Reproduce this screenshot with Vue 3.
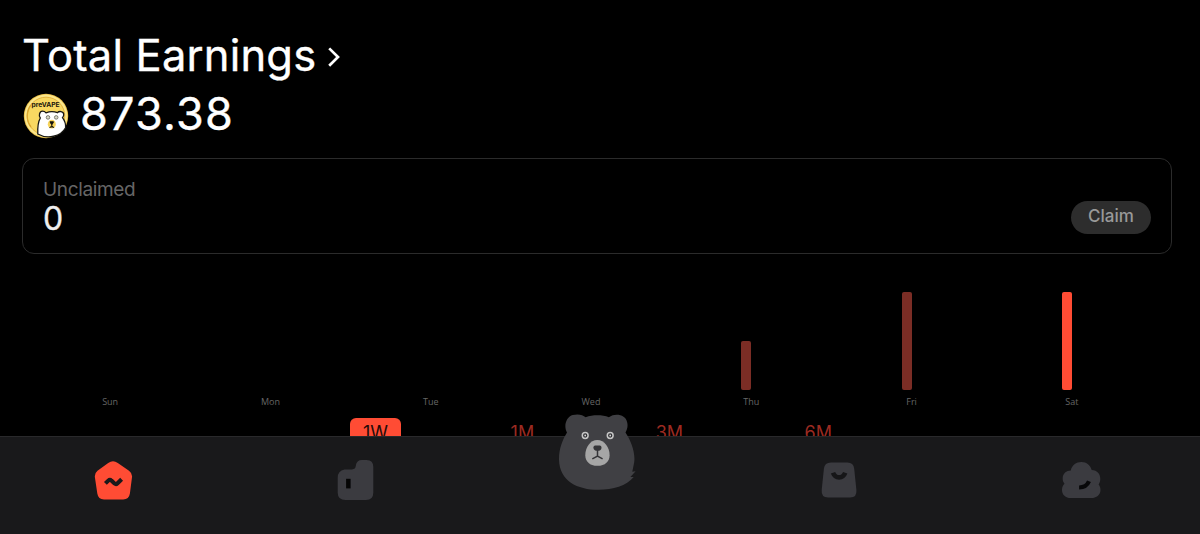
<script setup>
import { ref } from 'vue'

const days = [
  { label: 'Sun', height: 0 },
  { label: 'Mon', height: 0 },
  { label: 'Tue', height: 0 },
  { label: 'Wed', height: 0 },
  { label: 'Thu', height: 49 },
  { label: 'Fri', height: 98 },
  { label: 'Sat', height: 98 },
]

const periods = ['1W', '1M', '3M', '6M']
const period = ref('1W')
const today = 'Sat'
</script>

<template>
  <div class="screen">
    <main class="content">
      <!-- Earnings summary -->
      <h1 class="title">
        <span class="title-text">Total Earnings</span>
        <svg class="chevron" width="14" height="22" viewBox="0 0 14 22">
          <path d="M2.2 2.4 11 11l-8.8 8.8" fill="none" stroke="#fff" stroke-width="2.7" />
        </svg>
      </h1>
      <div class="balance">
        <svg class="coin" width="46" height="46" viewBox="0 0 46 46">
          <circle cx="23" cy="23" r="22.2" fill="#e9be45" />
          <circle cx="23" cy="23" r="21.4" fill="#fbe68b" />
          <circle cx="23" cy="23" r="18.8" fill="#f8d861" stroke="#e4b33c" stroke-width="1" />
          <path d="M8 12a18 18 0 0 0 0 22" fill="none" stroke="#dba72f" stroke-width="1.3" />
          <path
            d="M14.8 41C14.5 34 15 29 17.3 25c-1.9-2-.8-6.9 2.2-6.9 1.7 0 2.7.7 3.5 1.7 3.9-1.6 8-1.5 11.5-.1 1.5-2 6-1.4 6.2 1.4.2 1.6-.5 2.8-1.2 3.5 2.5 3.4 3.5 6.3 3.1 10.1-4.8 8.7-18 12-27.8 6.3z"
            fill="#fff" stroke="#171713" stroke-width="1.3"
          />
          <circle cx="25" cy="24.4" r="1.8" fill="#d9d9c6" stroke="#55554b" stroke-width=".7" />
          <circle cx="33.2" cy="24.4" r="1.8" fill="#d9d9c6" stroke="#55554b" stroke-width=".7" />
          <ellipse cx="28.8" cy="31.2" rx="4" ry="4.4" fill="#f8d45a" />
          <path d="M27 28.8h3.5l-1.2 2.4h-1zM28.8 31v2.3m-2.3 1.3 2.3-1.4 2.3 1.4" fill="#16140e" stroke="#16140e" stroke-width="1" />
          <text x="22.6" y="14.4" class="coin-text">preVAPE</text>
        </svg>
        <span class="amount">873.38</span>
      </div>

      <section class="card">
        <div class="card-info">
          <div class="card-label">Unclaimed</div>
          <div class="card-value">0</div>
        </div>
        <button class="claim">Claim</button>
      </section>

      <!-- Weekly chart -->
      <section class="chart">
        <div v-for="d in days" :key="d.label" class="day">
          <div class="track">
            <div
              v-if="d.height"
              class="bar"
              :class="{ active: d.label === today }"
              :style="{ height: d.height + 'px' }"
            ></div>
          </div>
          <div class="day-label">{{ d.label }}</div>
        </div>
      </section>

      <div class="periods">
        <button
          v-for="p in periods"
          :key="p"
          class="period"
          :class="{ active: p === period }"
          @click="period = p"
        >{{ p }}</button>
      </div>
    </main>

    <!-- Bottom navigation -->
    <nav class="nav">
      <a class="nav-item" aria-label="Home">
        <svg width="40" height="44" viewBox="0 0 40 44">
          <path d="M15.2 2.9Q20 -.5 24.8 2.9L36 10.8Q39.8 13.6 38.9 18L36.9 33.6Q36 39.5 30.2 39.5H11Q5.2 39.5 4.3 33.6L2 18Q1.1 13.6 4.5 10.8Z" fill="#ff4c34" />
          <path d="m12.4 23.4 2.9-2.8q1.6-1.5 3.1 0l3.1 2.9q1.5 1.2 2.8 0l4.3-4.2" fill="none" stroke="#19191b" stroke-width="4.1" />
        </svg>
      </a>
      <a class="nav-item" aria-label="Stats">
        <svg width="40" height="44" viewBox="0 0 40 44">
          <path d="M2.7 18Q2.7 10.5 9.5 9.5H17Q20.6 9.2 20.8 5.8 21.5 0 27 0h4.5q6.8 0 6.8 7v25.5Q38.3 40 31 40H10.5Q2.7 40 2.7 32.5Z" fill="#3b3b40" />
          <path d="M11.1 18.8h4.5v9.6h-4.5z" fill="#050505" />
        </svg>
      </a>
      <a class="nav-item" aria-label="Bear">
        <svg class="bear" width="78" height="78" viewBox="0 0 78 78">
          <path
            d="M9 19.5C5.2 12.8 8.4 3.8 14.8 2.1c5.3-1.6 10-.2 12.9 2.1 7.2-2.5 16.3-2.5 23.2 0C57.2-.5 67.9 1.5 69.2 9.4c.9 3.5 0 7.4-1.7 10.1 5 7.7 10.1 19 8.7 29.7l-1.9 9.5 3.3-.4-5.2 5.8h3.3c-7.2 8.8-20.8 12.7-35 12.7C19 76.8 1.5 67.8 1 46.7.8 36.2 4.6 26.5 9 19.5z"
            fill="#404044"
          />
          <circle cx="27.2" cy="22.5" r="2.9" fill="#303034" stroke="#c7c7c7" stroke-width="1.5" />
          <circle cx="52.2" cy="22.5" r="2.9" fill="#303034" stroke="#c7c7c7" stroke-width="1.5" />
          <circle cx="27.2" cy="22.5" r=".9" fill="#d5d5d5" />
          <circle cx="52.2" cy="22.5" r=".9" fill="#d5d5d5" />
          <path d="M39.3 27c7.1 0 12.3 7.5 12.3 15.2 0 6.2-4.4 10.6-12.2 10.6S27.3 48.4 27.3 42.2C27.3 34.5 32.2 27 39.3 27z" fill="#a6a6a6" />
          <path d="M35.4 34.4q0-1.8 1.8-1.8h4.5q1.8 0 1.8 1.8 0 3.4-4 3.4t-4.1-3.4z" fill="#353538" />
          <path d="M39.5 36v7.1m-5.2 2.8 5.2-2.8 5.1 2.8" fill="none" stroke="#353538" stroke-width="1.5" />
        </svg>
      </a>
      <a class="nav-item" aria-label="Shop">
        <svg width="40" height="44" viewBox="0 0 40 44">
          <path d="M4.9 8.7Q5.6 2.6 12 2.6h16.3q6.2 0 6.9 6.1l2.2 21.3q.7 7.6-6.3 7.6H9.2q-7.2 0-6.5-7.6z" fill="#3b3b40" />
          <path d="M14 12.8c1 2.8 3.1 4.6 6.1 4.6s5.1-1.8 6.1-4.6" fill="none" stroke="#161618" stroke-width="4.6" />
        </svg>
      </a>
      <a class="nav-item" aria-label="Profile">
        <svg width="40" height="44" viewBox="0 0 40 44">
          <path d="M9.8 10.6C10.8 5 15.2 2 20.4 2s9 3.4 10.3 8.1c5.7.2 8.6 4.3 8.6 8.9 0 2.3-.7 3.9-1.7 5.4 1.3 1.7 2 3.5 1.9 5.8-.3 4.7-3.9 7.8-9.4 7.8H9.8C4.6 38 1 34.7 1 29.9c0-2.6.9-4.7 2.5-6.2C2 21.9 1.6 20.3 1.7 18c.2-4.4 3.6-7.4 8.1-7.4z" fill="#3b3b40" />
          <path d="M18.1 27.5c4.9 0 8.2-2.2 9.9-6.2" fill="none" stroke="#080809" stroke-width="4.2" />
        </svg>
      </a>
    </nav>
  </div>
</template>

<style>
body {
  background: #000;
}
</style>

<style scoped>
.screen {
  display: flex;
  flex-direction: column;
  height: 534px;
  overflow: hidden;
  background: #000;
  color: #fff;
  font-family: Inter, 'Liberation Sans', sans-serif;
}

.content {
  height: 436px;
  box-sizing: border-box;
  padding: 27px 28px 0 22px;
  overflow: hidden;
}

.title {
  display: flex;
  align-items: center;
  height: 56px;
  margin: 0;
  font-size: 43.5px;
  font-weight: 400;
  line-height: 56px;
  letter-spacing: 0.2px;
  white-space: nowrap;
  -webkit-text-stroke: 0.35px #fff;
}

.title-text {
  width: 305px;
}

.chevron {
  margin-top: 3px;
}

.balance {
  display: flex;
  align-items: center;
  gap: 11px;
  height: 60px;
  padding-left: 1px;
}

.coin {
  margin-top: 5px;
}

.coin-text {
  font: 700 6.7px Inter, sans-serif;
  text-anchor: middle;
  fill: #17150b;
}

.amount {
  margin-top: 2px;
  font-size: 45px;
  line-height: 60px;
  letter-spacing: 1.2px;
  -webkit-text-stroke: 0.35px #fff;
}

.card {
  display: flex;
  justify-content: space-between;
  align-items: flex-end;
  box-sizing: border-box;
  height: 96px;
  margin-top: 15px;
  padding: 18px 20px 19px;
  border: 1px solid #2b2b2b;
  border-radius: 12px;
}

.card-info {
  margin-bottom: -3px;
}

.card-label {
  color: #666;
  font-size: 19px;
  line-height: 23px;
  letter-spacing: -0.35px;
}

.card-value {
  color: #eee;
  font-size: 32px;
  line-height: 36px;
  -webkit-text-stroke: 0.3px #eee;
}

.claim {
  width: 80px;
  height: 33px;
  padding: 0 0 3px;
  border: 0;
  border-radius: 17px;
  background: #2d2d2d;
  color: #999;
  font: 500 17px Inter, sans-serif;
}

.chart {
  display: grid;
  grid-template-columns: repeat(7, 1fr);
  margin: 38px 20px 0 8px;
}

.day {
  display: flex;
  flex-direction: column;
  align-items: center;
}

.track {
  display: flex;
  align-items: flex-end;
  height: 98px;
  padding-right: 10px;
}

.bar {
  width: 10px;
  border-radius: 2px;
  background: #7b2d25;
}

.bar.active {
  background: #ff4c34;
}

.day-label {
  margin-top: 6px;
  color: #666;
  font: 9px/12px 'Open Sans', sans-serif;
}

.periods {
  display: flex;
  justify-content: space-between;
  width: 494px;
  margin: 10px 0 0 328px;
}

.period {
  height: 30px;
  padding: 0 12px;
  border: 0;
  border-radius: 6px;
  background: none;
  color: #9c2a21;
  font: 18px/30px Inter, sans-serif;
}

.period.active {
  padding: 0 13px;
  background: #ff4c34;
  color: #260b08;
}

.nav {
  display: flex;
  justify-content: space-between;
  box-sizing: border-box;
  height: 98px;
  padding: 23px 99px 0 93px;
  border-top: 1px solid #29292b;
  background: #19191b;
}

.nav-item {
  position: relative;
  width: 40px;
  height: 44px;
}

.bear {
  position: absolute;
  left: -19px;
  top: -47px;
}
</style>
